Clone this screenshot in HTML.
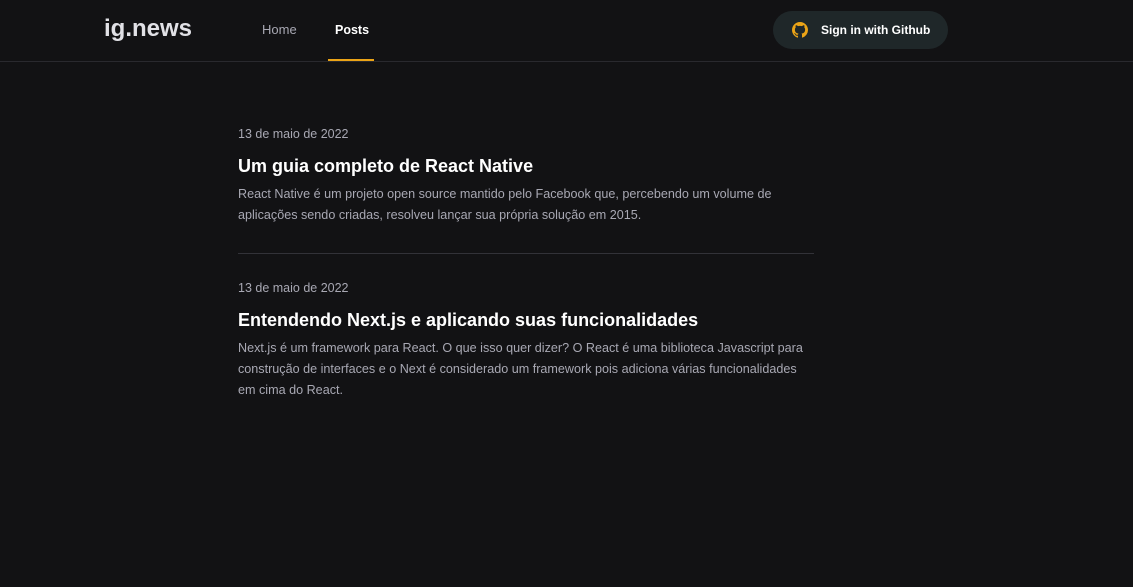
<!DOCTYPE html>
<html><head><style>
*{margin:0;padding:0;box-sizing:border-box}
body{width:1133px;height:587px;background:#121214;font-family:"Liberation Sans",sans-serif;overflow:hidden;position:relative}
header{height:62px;border-bottom:1px solid #29292e;position:relative}
.logo{position:absolute;left:104px;top:15px;color:#e1e1e6;font-size:24px;font-weight:bold}
.nav{position:absolute;top:22px;font-size:13px}
.home{left:262px;color:#a8a8b3}
.posts{left:335px;top:23px;color:#fff;font-weight:bold;font-size:12.5px}
.ul{position:absolute;left:328px;top:59px;width:46px;height:2px;background:#eba417}
.btn{position:absolute;left:773px;top:11px;width:175px;height:38px;border-radius:19px;background:#1f2729;color:#fff;font-weight:bold;font-size:12px}
.btn span{position:absolute;left:48px;top:12px}
.btn svg{position:absolute;left:19px;top:11px}
.post{position:absolute;left:238px;width:580px}
.date{color:#a8a8b3;font-size:12.5px}
h2{color:#fff;font-size:18px;margin-top:15px}
p{color:#a8a8b3;font-size:12.6px;line-height:21px;margin-top:7px}
.hr{position:absolute;left:238px;top:253px;width:576px;height:1px;background:#323238}
</style></head><body>
<header>
<div class="logo">ig.news</div>
<div class="nav home">Home</div>
<div class="nav posts">Posts</div>
<div class="ul"></div>
<div class="btn"><svg width="16" height="16" viewBox="0 0 16 16"><path fill="#eba417" d="M8 0C3.58 0 0 3.58 0 8c0 3.540 2.29 6.530 5.470 7.590.4.070.55-.170.55-.380 0-.190-.010-.820-.010-1.490-2.010.370-2.530-.490-2.690-.940-.090-.230-.480-.940-.820-1.130-.280-.150-.680-.520-.010-.530.630-.010 1.080.580 1.230.820.720 1.210 1.870.870 2.330.660.070-.520.280-.870.510-1.070-1.780-.2-3.640-.890-3.640-3.950 0-.870.310-1.590.820-2.150-.080-.2-.360-1.020.080-2.120 0 0 .670-.210 2.200.820.640-.180 1.320-.270 2-.270.680 0 1.360.090 2 .270 1.530-1.040 2.200-.820 2.200-.820.440 1.100.160 1.920.080 2.120.510.560.820 1.270.820 2.150 0 3.070-1.870 3.750-3.650 3.950.290.250.540.730.540 1.480 0 1.070-.010 1.930-.010 2.200 0 .210.150.460.550.380A8.013 8.013 0 0016 8c0-4.420-3.580-8-8-8z"/></svg><span>Sign in with Github</span></div>
</header>
<div class="post" style="top:127px"><div class="date">13 de maio de 2022</div><h2>Um guia completo de React Native</h2><p>React Native é um projeto open source mantido pelo Facebook que, percebendo um volume de aplicações sendo criadas, resolveu lançar sua própria solução em 2015.</p></div>
<div class="hr"></div>
<div class="post" style="top:281px;width:576px"><div class="date">13 de maio de 2022</div><h2>Entendendo Next.js e aplicando suas funcionalidades</h2><p>Next.js é um framework para React. O que isso quer dizer? O React é uma biblioteca Javascript para construção de interfaces e o Next é considerado um framework pois adiciona várias funcionalidades em cima do React.</p></div>
</body></html>
